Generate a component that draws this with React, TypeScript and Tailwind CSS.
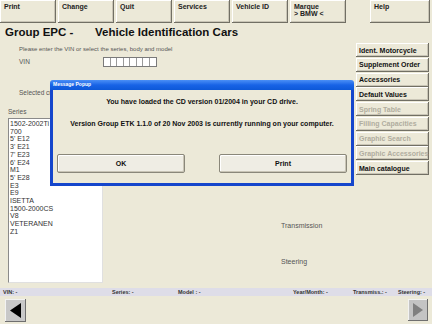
const toolBtn =
  "flex h-[23px] w-[56px] flex-col items-start bg-[#ece9d8] px-[4px] pt-[3px] text-[7px] font-bold leading-[7px] text-[#222] shadow-[inset_-1px_-1px_0_#716f64,inset_1px_1px_0_#ffffff,inset_-2px_-2px_0_#c9c5b6]";

const sideBtn =
  "flex h-[14px] w-[73px] items-center bg-[#ece9d8] pl-[3px] text-[7px] font-bold leading-[7px] shadow-[inset_-1px_-1px_0_#716f64,inset_1px_1px_0_#ffffff,inset_-2px_-2px_0_#c9c5b6]";

const sideButtons = [
  { label: "Ident. Motorcycle", enabled: true },
  { label: "Supplement Order", enabled: true },
  { label: "Accessories", enabled: true },
  { label: "Default Values", enabled: true },
  { label: "Spring Table", enabled: false },
  { label: "Filling Capacities", enabled: false },
  { label: "Graphic Search", enabled: false },
  { label: "Graphic Accessories", enabled: false },
  { label: "Main catalogue", enabled: true },
];

const series = [
  "1502-2002Ti",
  "700",
  "5' E12",
  "3' E21",
  "7' E23",
  "6' E24",
  "M1",
  "5' E28",
  "E3",
  "E9",
  "ISETTA",
  "1500-2000CS",
  "V8",
  "VETERANEN",
  "Z1",
];

export default function App() {
  return (
    <div className="relative flex h-[324px] w-[432px] flex-col overflow-hidden bg-[#ece9d8] font-['Liberation_Sans',Arial,sans-serif] text-[#222]">
      {/* toolbar */}
      <div className="flex h-[23px] gap-[2px]">
        <div className={toolBtn}>Print</div>
        <div className={toolBtn}>Change</div>
        <div className={toolBtn}>Quit</div>
        <div className={toolBtn}>Services</div>
        <div className={toolBtn}>Vehicle ID</div>
        <div className={toolBtn}>
          <span>Marque</span>
          <span>&gt; BMW &lt;</span>
        </div>
        <div className={`${toolBtn} ml-[22px] w-[60px]`}>Help</div>
      </div>

      <div className="flex h-[265px]">
        {/* left side */}
        <div className="flex w-[356px] flex-col">
          <div className="flex h-[19px] pl-[5px] text-[11.5px] font-bold leading-[19px] text-[#111]">
            <span className="w-[90px]">Group EPC -</span>
            <span>Vehicle Identification Cars</span>
          </div>
          <div className="mt-[3px] h-[8px] pl-[19px] text-[6px] leading-[8px] text-[#555]">
            Please enter the VIN or select the series, body and model
          </div>
          <div className="mt-[4px] flex h-[10px] items-center pl-[19px]">
            <span className="w-[84px] text-[6.5px] text-[#555]">VIN</span>
            <div className="flex h-[10px] border border-[#7a7a7a] bg-white">
              {Array.from({ length: 8 }).map((_, i) => (
                <div key={i} className="h-full w-[6.5px] border-r border-[#9a9a9a] last:border-r-0" />
              ))}
            </div>
          </div>
          <div className="mt-[22px] h-[8px] pl-[19px] text-[6.5px] leading-[8px] text-[#555]">Selected criteria</div>
          <div className="mt-[11px] h-[8px] pl-[8px] text-[6.5px] leading-[8px] text-[#555]">Series</div>
          <div className="mt-[2px] flex h-[165px]">
            <div className="ml-[8px] w-[95px] border border-t-[#8a8a8a] border-l-[#8a8a8a] border-r-[#e0e0e0] border-b-[#e0e0e0] bg-white pl-[1px] pt-[1px] text-[7px] leading-[7.7px] text-[#333]">
              {series.map((s) => (
                <div key={s}>{s}</div>
              ))}
            </div>
            <div className="flex flex-1 flex-col pl-[178px] pt-[104px] text-[7px] leading-[8px] text-[#555]">
              <span>Transmission</span>
              <span className="mt-[28px]">Steering</span>
            </div>
          </div>
        </div>

        {/* right buttons */}
        <div className="flex flex-col gap-[0.75px] pt-[20px]">
          {sideButtons.map((b) => (
            <div key={b.label} className={`${sideBtn} ${b.enabled ? "text-[#111]" : "text-[#b0ad9f]"}`}>
              {b.label}
            </div>
          ))}
        </div>
      </div>

      {/* status bar */}
      <div className="relative h-[8px] bg-[#dedde8] text-[5.5px] font-bold leading-[8px] text-[#333]">
        <span className="absolute left-[3px]">VIN: -</span>
        <span className="absolute left-[112px]">Series: -</span>
        <span className="absolute left-[178px]">Model : -</span>
        <span className="absolute left-[293px]">Year/Month: -</span>
        <span className="absolute left-[353px]">Transmiss.: -</span>
        <span className="absolute left-[398px]">Steering: -</span>
      </div>

      {/* bottom navigation */}
      <div className="flex h-[28px] items-start justify-between pl-[5px] pr-[4px] pt-[3px]">
        <div className="flex h-[23px] w-[21px] items-center justify-center bg-[#c8c8c8] shadow-[inset_-1px_-1px_0_#6f6f6f,inset_1px_1px_0_#f2f2f2]">
          <svg width="15" height="17" viewBox="0 0 15 17">
            <polygon points="13,1 13,16 2,8.5" fill="#000" />
          </svg>
        </div>
        <div className="flex h-[22px] w-[20px] items-center justify-center bg-[#c4c4c4] shadow-[inset_-1px_-1px_0_#6f6f6f,inset_1px_1px_0_#f2f2f2]">
          <svg width="14" height="16" viewBox="0 0 14 16">
            <polygon points="2,1 2,15 12,8" fill="#808080" />
          </svg>
        </div>
      </div>

      {/* message popup */}
      <div className="absolute left-[50px] top-[80px] flex h-[106px] w-[304px] flex-col">
        <div className="flex h-[10px] items-center rounded-t-[3px] bg-gradient-to-b from-[#4a8ff6] via-[#1863e6] to-[#0d58d8] pl-[3px] text-[5px] font-bold text-white">
          Message Popup
        </div>
        <div className="flex flex-1 flex-col border-x-[3px] border-b-[3px] border-[#1546cc] bg-[#ece9d8] text-[7px] font-bold leading-[8px] text-[#111]">
          <div className="mt-[8px] text-center">You have loaded the CD version 01/2004 in your CD drive.</div>
          <div className="mt-[14px] text-center">Version Group ETK 1.1.0 of 20 Nov 2003 is currently running on your computer.</div>
          <div className="mt-[26px] flex gap-[34px] pl-[4px]">
            <div className="flex h-[19px] w-[128px] items-center justify-center rounded-[2px] border border-[#8a877a] bg-[#efede4] shadow-[inset_-1px_-1px_0_#c9c5b6,inset_1px_1px_0_#ffffff]">
              OK
            </div>
            <div className="flex h-[19px] w-[128px] items-center justify-center rounded-[2px] border border-[#8a877a] bg-[#efede4] shadow-[inset_-1px_-1px_0_#c9c5b6,inset_1px_1px_0_#ffffff]">
              Print
            </div>
          </div>
        </div>
      </div>
    </div>
  );
}
